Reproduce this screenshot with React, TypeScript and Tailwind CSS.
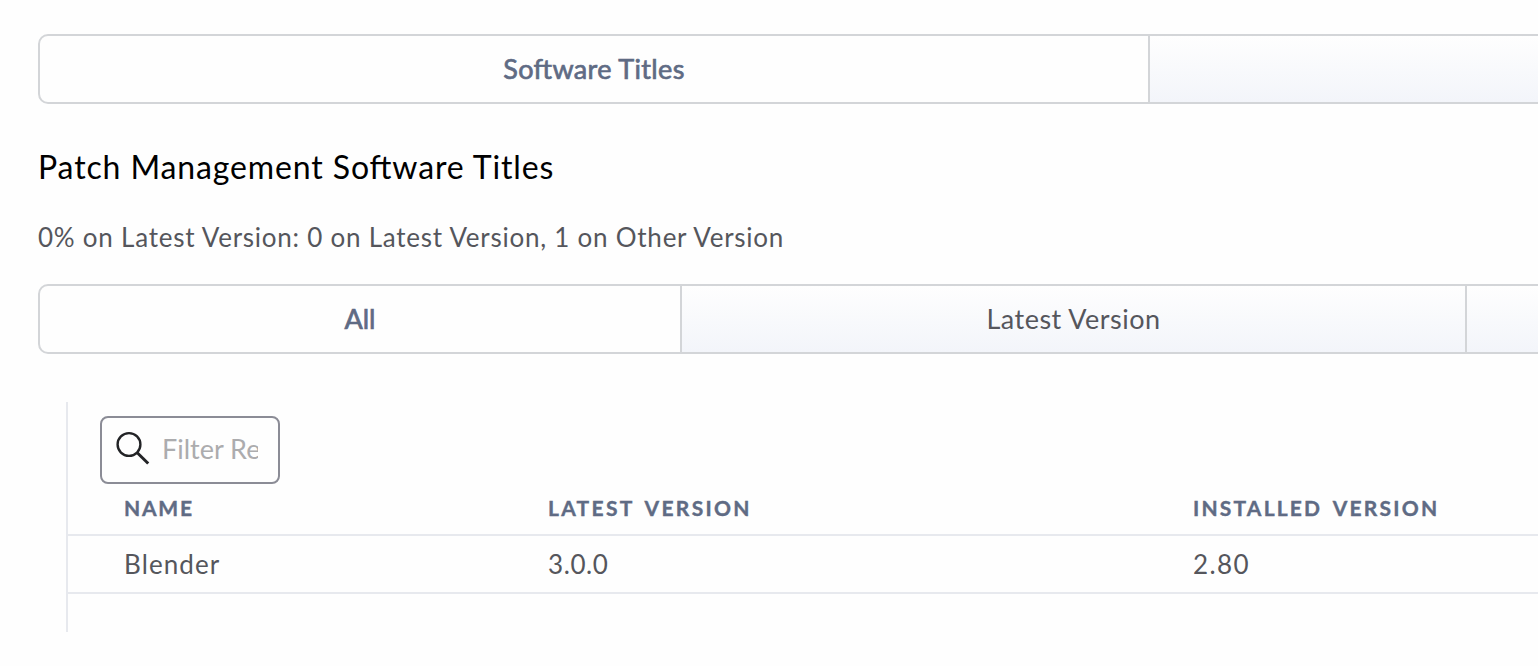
import type { ReactNode } from 'react';

interface Column {
  label: string;
  value: string;
  width: string;
  labelSpacing: string;
  valueSpacing: string;
}

const columns: Column[] = [
  { label: 'Name', value: 'Blender', width: 'w-[424px]', labelSpacing: 'tracking-[1.8px]', valueSpacing: 'tracking-[1.1px]' },
  { label: 'Latest Version', value: '3.0.0', width: 'w-[645px]', labelSpacing: 'tracking-[2.3px] [word-spacing:4px]', valueSpacing: 'tracking-[0.6px]' },
  { label: 'Installed Version', value: '2.80', width: 'w-[500px]', labelSpacing: 'tracking-[2.2px] [word-spacing:4px]', valueSpacing: 'tracking-[1.4px]' },
];

const TabBar = ({ children }: { children: ReactNode }) => (
  <div className="ml-[38px] flex h-[70px] w-[1600px] overflow-hidden rounded-l-[10px] border-2 border-[#d3d5d8]">
    {children}
  </div>
);

const Tab = ({ active = false, className, children }: { active?: boolean; className: string; children?: ReactNode }) => (
  <button
    className={`flex shrink-0 items-center justify-center border-r-2 border-[#d3d5d8] text-[27px] leading-8 ${
      active
        ? 'text-[#5f6b84] [-webkit-text-stroke:0.7px_#5f6b84]'
        : 'bg-linear-to-b from-[#fefefe] to-[#f3f5fa] text-[#55565c]'
    } ${className}`}
  >
    {children}
  </button>
);

const SearchIcon = () => (
  <svg width="34" height="34" viewBox="0 0 34 34" fill="none" stroke="#222326" className="mb-1 shrink-0">
    <circle cx="13" cy="13.5" r="11.4" strokeWidth="2.4" />
    <path d="M21 21.5L32.2 32.5" strokeWidth="3" />
  </svg>
);

const PatchTable = () => (
  <div className="ml-[66px] mt-12 h-[230px] w-[1600px] border-l-2 border-[#e7e9ee] pt-3.5">
    <label className="ml-8 flex h-[68px] w-[180px] items-center rounded-[8px] border-2 border-[#8b8c96] pl-3.5">
      <SearchIcon />
      <span className="mb-0.5 ml-3 w-24 overflow-hidden whitespace-nowrap text-[27px] leading-8 text-[#acacae]">
        Filter Results
      </span>
    </label>
    <div className="flex h-[52px] items-center border-b-2 border-[#e7e9ee] pb-0.5 pl-14">
      {columns.map((col) => (
        <div
          key={col.label}
          className={`shrink-0 text-[21px] font-bold uppercase leading-7 text-[#5f6b84] [-webkit-text-stroke:0.4px_#5f6b84] ${col.labelSpacing} ${col.width}`}
        >
          {col.label}
        </div>
      ))}
    </div>
    <div className="flex h-[58px] items-center border-b-2 border-[#e7e9ee] pl-14">
      {columns.map((col) => (
        <div key={col.label} className={`shrink-0 text-[26px] leading-8 text-[#55565c] ${col.valueSpacing} ${col.width}`}>
          {col.value}
        </div>
      ))}
    </div>
  </div>
);

export default function App() {
  return (
    <main className="h-[666px] w-full overflow-hidden bg-[#fefefe] pt-[34px] font-['Lato',sans-serif] [font-feature-settings:'liga']">
      <TabBar>
        <Tab active className="w-[1110px] tracking-[0.35px]">Software Titles</Tab>
        <Tab className="w-[600px]" />
      </TabBar>

      <h1 className="ml-[38px] mt-[43px] whitespace-nowrap text-[32px] leading-10 tracking-[0.88px] text-black">
        Patch Management Software Titles
      </h1>
      <p className="mb-[31px] ml-[38px] mt-[34px] whitespace-nowrap text-[26px] leading-8 tracking-[0.76px] text-[#55565c]">
        0% on Latest Version: 0 on Latest Version, 1 on Other Version
      </p>

      <TabBar>
        <Tab active className="w-[642px]">All</Tab>
        <Tab className="w-[785px] tracking-[0.5px]">Latest Version</Tab>
        <Tab className="w-[400px]" />
      </TabBar>

      <PatchTable />
    </main>
  );
}
